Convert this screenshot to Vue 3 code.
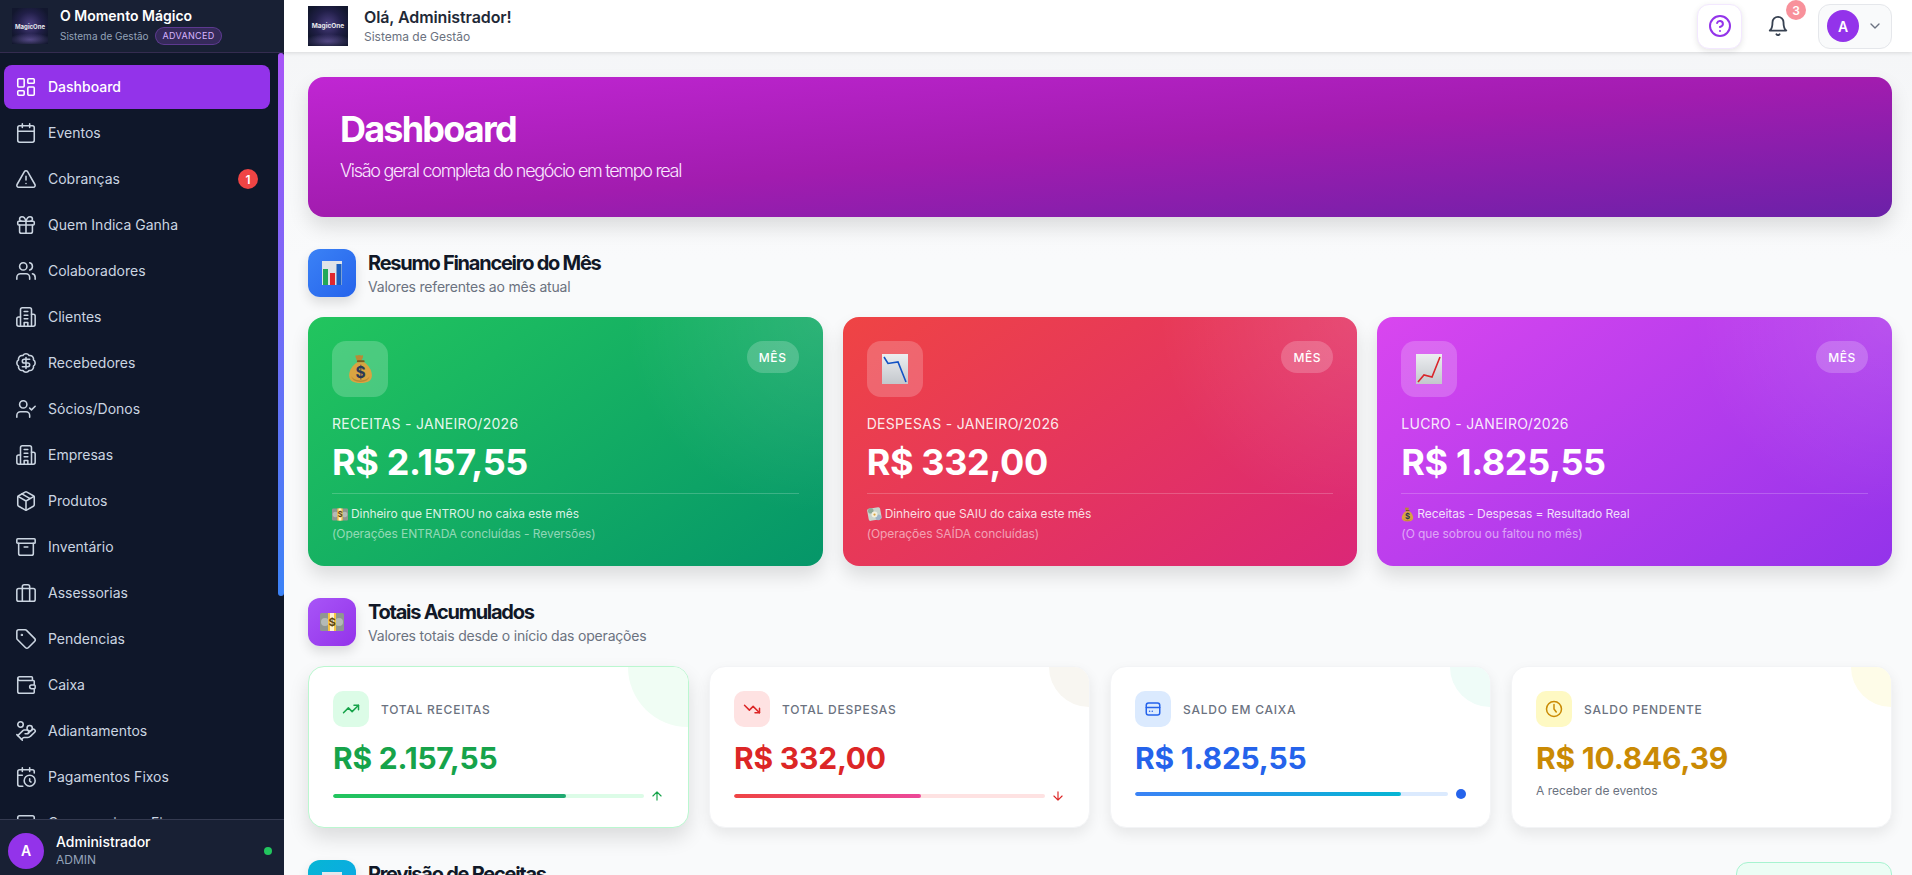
<template>
  <div class="layout">
    <aside class="sidebar">
      <div class="brand">
        <div class="logo"><span>MagicOne</span></div>
        <div class="brand-text">
          <div class="brand-name">O Momento Mágico</div>
          <div class="brand-sub">Sistema de Gestão <span class="plan">ADVANCED</span></div>
        </div>
      </div>
      <nav class="nav">
        <div class="scroll-thumb"></div>
        <a v-for="item in menu" :key="item.label" class="nav-item" :class="{ active: item.active }">
          <svg class="nav-icon" viewBox="0 0 24 24" v-html="item.icon"></svg>
          <span class="nav-label">{{ item.label }}</span>
          <span v-if="item.badge" class="nav-badge">{{ item.badge }}</span>
        </a>
      </nav>
      <div class="user-box">
        <div class="user-avatar">A</div>
        <div class="user-text">
          <div class="user-name">Administrador</div>
          <div class="user-role">ADMIN</div>
        </div>
        <span class="online"></span>
      </div>
    </aside>

    <div class="main">
      <header class="topbar">
        <div class="logo top-logo"><span>MagicOne</span></div>
        <div class="hello">
          <div class="hello-title">Olá, Administrador!</div>
          <div class="hello-sub">Sistema de Gestão</div>
        </div>
        <div class="top-actions">
          <button class="help-btn">
            <svg viewBox="0 0 24 24" width="24" height="24" class="ico"><circle cx="12" cy="12" r="10"/><path d="M9.09 9a3 3 0 0 1 5.83 1c0 2-3 3-3 3"/><path d="M12 17h.01"/></svg>
          </button>
          <div class="bell">
            <svg viewBox="0 0 24 24" width="22" height="22" class="ico"><path d="M6 8a6 6 0 0 1 12 0c0 7 3 9 3 9H3s3-2 3-9"/><path d="M10.3 21a1.94 1.94 0 0 0 3.4 0"/></svg>
            <span class="bell-badge">3</span>
          </div>
          <div class="profile">
            <div class="profile-avatar">A</div>
            <svg viewBox="0 0 24 24" width="16" height="16" class="ico chevron"><path d="m6 9 6 6 6-6"/></svg>
          </div>
        </div>
      </header>

      <main class="content">
        <section class="banner">
          <h1>Dashboard</h1>
          <p>Visão geral completa do negócio em tempo real</p>
        </section>

        <div class="section-head">
          <div class="section-icon blue">
            <svg viewBox="0 0 20 24" width="20" height="24" v-html="art.bars"></svg>
          </div>
          <div>
            <h2>Resumo Financeiro do Mês</h2>
            <p>Valores referentes ao mês atual</p>
          </div>
        </div>
        <div class="month-grid">
          <div v-for="card in monthCards" :key="card.label" class="month-card" :class="card.tone">
            <div class="month-top">
              <div class="month-icon">
                <svg :viewBox="card.box" :width="card.w" :height="card.h" v-html="card.art"></svg>
              </div>
              <span class="month-pill">MÊS</span>
            </div>
            <div class="month-label">{{ card.label }}</div>
            <div class="month-value">{{ card.value }}</div>
            <div class="month-note">
              <div class="note-line">
                <svg class="note-art" :viewBox="card.noteBox" :width="card.noteW" height="15" v-html="card.noteArt"></svg>
                <span>{{ card.note }}</span>
              </div>
              <div class="month-hint">{{ card.hint }}</div>
            </div>
          </div>
        </div>

        <div class="section-head">
          <div class="section-icon purple">
            <svg viewBox="0 0 24 18" width="24" height="18" v-html="art.note"></svg>
          </div>
          <div>
            <h2>Totais Acumulados</h2>
            <p>Valores totais desde o início das operações</p>
          </div>
        </div>
        <div class="total-grid">
          <div v-for="card in totalCards" :key="card.label" class="total-card" :class="card.tone">
            <div class="total-head">
              <div class="total-icon">
                <svg viewBox="0 0 24 24" width="18" height="18" class="ico" v-html="card.icon"></svg>
              </div>
              <span class="total-label">{{ card.label }}</span>
            </div>
            <div class="total-value">{{ card.value }}</div>
            <div v-if="card.fill" class="total-bar-row">
              <div class="total-bar"><div class="total-fill" :style="{ width: card.fill + '%' }"></div></div>
              <svg v-if="card.arrow" viewBox="0 0 24 24" width="14" height="14" class="ico total-arrow" v-html="card.arrow"></svg>
              <span v-else class="total-dot"></span>
            </div>
            <div v-else class="total-text">{{ card.text }}</div>
          </div>
        </div>

        <div class="section-head">
          <div class="section-icon cyan">
            <svg viewBox="0 0 20 24" width="20" height="24"><rect width="20" height="24" fill="#e5e7eb"/></svg>
          </div>
          <div>
            <h2>Previsão de Receitas</h2>
            <p>Valores a receber</p>
          </div>
          <div class="forecast-btn"></div>
        </div>
      </main>
    </div>
  </div>
</template>

<script setup>
const art = {
  bars: '<rect width="20" height="24" fill="#dfe3e8"/><rect x="1" y="8" width="5" height="16" fill="#22a858"/><rect x="8" y="12" width="5" height="12" fill="#e0282e"/><rect x="14.5" y="3" width="5" height="21" fill="#1a5fc0"/>',
  note: '<rect width="24" height="18" rx="1.5" fill="#8f9691"/><circle cx="5" cy="9" r="4" fill="#b4bab6"/><circle cx="19" cy="9" r="4" fill="#b4bab6"/><rect x="8" width="8" height="18" fill="#f6c544"/><rect x="10" width="4" height="18" fill="#fff3cf"/><text x="12" y="13" font-size="11" font-weight="700" text-anchor="middle" fill="#5c4310">$</text>',
  bag: '<path d="M9 7C7.5 4.5 6.5 2 7.5 1c1.2 1 2 .2 3.2 0 1.3.2 2.2 1 3.3 0 1.2 1 0 3.5-1.500 6z" fill="#b98a35"/><rect x="8.5" y="6" width="7.500" height="2.200" rx="1" fill="#7a5a1e"/><path d="M9 8C4 11 1 16 1 20.500 1 26 5 28 12 28s11-2 11-7.500C23 16 20 11 15.500 8z" fill="#d9a441"/><path d="M3 21c1 4 4 6 9 6s8-2 9-6c-1 2.500-4 4.500-9 4.500S4 23.500 3 21z" fill="#b98a35"/><text x="12" y="23" font-size="15" font-weight="700" text-anchor="middle" fill="#2b3a55">$</text>',
  down: '<defs><linearGradient id="chartDown" x1="0" y1="0" x2="0" y2="1"><stop offset="0" stop-color="#eceef0"/><stop offset="1" stop-color="#c3c7cc"/></linearGradient></defs><rect width="26" height="30" fill="url(#chartDown)"/><path d="M2 3 6 9.5 16 8 24 28" fill="none" stroke="#1453c4" stroke-width="1.6"/>',
  up: '<defs><linearGradient id="chartUp" x1="0" y1="0" x2="0" y2="1"><stop offset="0" stop-color="#eceef0"/><stop offset="1" stop-color="#c3c7cc"/></linearGradient></defs><rect width="26" height="30" fill="url(#chartUp)"/><path d="M2 28 8 21 16 23 24 3" fill="none" stroke="#d9262c" stroke-width="1.6"/>',
  flying: '<rect x="1" y="1" width="14" height="13" rx="2" fill="#c9d3cc" transform="rotate(-10 8 8)"/><circle cx="4" cy="4" r="3" fill="#8fa896"/><circle cx="12" cy="11" r="3" fill="#9fb4c8"/><circle cx="8" cy="8" r="3.2" fill="#f4f0dc"/><circle cx="8" cy="8" r="1.2" fill="#d9a441"/>'
}

const building = '<path d="M6 22V4a2 2 0 0 1 2-2h8a2 2 0 0 1 2 2v18Z"/><path d="M6 12H4a2 2 0 0 0-2 2v6a2 2 0 0 0 2 2h2M18 9h2a2 2 0 0 1 2 2v9a2 2 0 0 1-2 2h-2M10 6h4M10 10h4M10 14h4M10 22v-4h4v4"/>'

const menu = [
  { label: 'Dashboard', active: true, icon: '<rect x="3" y="3" width="7" height="9" rx="1"/><rect x="14" y="3" width="7" height="5" rx="1"/><rect x="14" y="12" width="7" height="9" rx="1"/><rect x="3" y="16" width="7" height="5" rx="1"/>' },
  { label: 'Eventos', icon: '<path d="M8 2v4M16 2v4"/><rect x="3" y="4" width="18" height="18" rx="2"/><path d="M3 10h18"/>' },
  { label: 'Cobranças', badge: 1, icon: '<path d="m21.73 18-8-14a2 2 0 0 0-3.48 0l-8 14A2 2 0 0 0 4 21h16a2 2 0 0 0 1.73-3"/><path d="M12 9v4M12 17h.01"/>' },
  { label: 'Quem Indica Ganha', icon: '<rect x="3" y="8" width="18" height="4" rx="1"/><path d="M12 8v13M19 12v7a2 2 0 0 1-2 2H7a2 2 0 0 1-2-2v-7"/><path d="M7.5 8a2.5 2.5 0 0 1 0-5A4.8 8 0 0 1 12 8a4.8 8 0 0 1 4.5-5 2.5 2.5 0 0 1 0 5"/>' },
  { label: 'Colaboradores', icon: '<path d="M16 21v-2a4 4 0 0 0-4-4H6a4 4 0 0 0-4 4v2"/><circle cx="9" cy="7" r="4"/><path d="M22 21v-2a4 4 0 0 0-3-3.87M16 3.13a4 4 0 0 1 0 7.75"/>' },
  { label: 'Clientes', icon: building },
  { label: 'Recebedores', icon: '<path d="M3.85 8.62a4 4 0 0 1 4.78-4.77 4 4 0 0 1 6.74 0 4 4 0 0 1 4.78 4.78 4 4 0 0 1 0 6.74 4 4 0 0 1-4.77 4.78 4 4 0 0 1-6.75 0 4 4 0 0 1-4.78-4.77 4 4 0 0 1 0-6.76Z"/><path d="M16 8h-6a2 2 0 1 0 0 4h4a2 2 0 1 1 0 4H8M12 18V6"/>' },
  { label: 'Sócios/Donos', icon: '<path d="M16 21v-2a4 4 0 0 0-4-4H6a4 4 0 0 0-4 4v2"/><circle cx="9" cy="7" r="4"/><path d="m16 11 2 2 4-4"/>' },
  { label: 'Empresas', icon: building },
  { label: 'Produtos', icon: '<path d="M11 21.73a2 2 0 0 0 2 0l7-4A2 2 0 0 0 21 16V8a2 2 0 0 0-1-1.73l-7-4a2 2 0 0 0-2 0l-7 4A2 2 0 0 0 3 8v8a2 2 0 0 0 1 1.73z"/><path d="M12 22V12M3.29 7 12 12l8.71-5M7.5 4.27l9 5.15"/>' },
  { label: 'Inventário', icon: '<rect x="2" y="3" width="20" height="5" rx="1"/><path d="M4 8v11a2 2 0 0 0 2 2h12a2 2 0 0 0 2-2V8M10 12h4"/>' },
  { label: 'Assessorias', icon: '<rect x="2" y="7" width="20" height="14" rx="2"/><path d="M16 21V5a2 2 0 0 0-2-2h-4a2 2 0 0 0-2 2v16"/>' },
  { label: 'Pendencias', icon: '<path d="M12.586 2.586A2 2 0 0 0 11.172 2H4a2 2 0 0 0-2 2v7.172a2 2 0 0 0 .586 1.414l8.704 8.704a2.426 2.426 0 0 0 3.42 0l6.58-6.58a2.426 2.426 0 0 0 0-3.42z"/><circle cx="7.5" cy="7.5" r=".5"/>' },
  { label: 'Caixa', icon: '<path d="M19 7V4a1 1 0 0 0-1-1H5a2 2 0 0 0 0 4h15a1 1 0 0 1 1 1v4h-3a2 2 0 0 0 0 4h3a1 1 0 0 0 1-1v-2a1 1 0 0 0-1-1"/><path d="M3 5v14a2 2 0 0 0 2 2h15a1 1 0 0 0 1-1v-4"/>' },
  { label: 'Adiantamentos', icon: '<path d="M11 15h2a2 2 0 1 0 0-4h-3c-.6 0-1.1.2-1.4.6L3 17"/><path d="m7 21 1.6-1.4c.3-.4.8-.6 1.4-.6h4c1.1 0 2.1-.4 2.8-1.2l4.6-4.4a2 2 0 0 0-2.75-2.91l-4.2 3.9"/><path d="m2 16 6 6"/><circle cx="16" cy="9" r="2.9"/><circle cx="6" cy="5" r="3"/>' },
  { label: 'Pagamentos Fixos', icon: '<path d="M21 7.5V6a2 2 0 0 0-2-2H5a2 2 0 0 0-2 2v14a2 2 0 0 0 2 2h3.5M16 2v4M8 2v4M3 10h5M17.5 17.5 16 16.3V14"/><circle cx="16" cy="16" r="6"/>' },
  { label: 'Compromissos Fixos', icon: '<rect x="3" y="4" width="18" height="18" rx="2"/>' }
]

const monthCards = [
  { tone: 'green', art: art.bag, box: '0 0 24 29', w: 25, h: 30, label: 'RECEITAS - JANEIRO/2026', value: 'R$ 2.157,55', noteArt: art.note, noteBox: '0 0 24 18', noteW: 16, note: 'Dinheiro que ENTROU no caixa este mês', hint: '(Operações ENTRADA concluídas - Reversões)' },
  { tone: 'red', art: art.down, box: '0 0 26 30', w: 26, h: 30, label: 'DESPESAS - JANEIRO/2026', value: 'R$ 332,00', noteArt: art.flying, noteBox: '0 0 16 16', noteW: 15, note: 'Dinheiro que SAIU do caixa este mês', hint: '(Operações SAÍDA concluídas)' },
  { tone: 'violet', art: art.up, box: '0 0 26 30', w: 26, h: 30, label: 'LUCRO - JANEIRO/2026', value: 'R$ 1.825,55', noteArt: art.bag, noteBox: '0 0 24 29', noteW: 13, note: 'Receitas - Despesas = Resultado Real', hint: '(O que sobrou ou faltou no mês)' }
]

const totalCards = [
  { tone: 'income', label: 'TOTAL RECEITAS', value: 'R$ 2.157,55', fill: 75, arrow: '<path d="m5 12 7-7 7 7M12 19V5"/>', icon: '<path d="M22 7 13.5 15.5l-5-5L2 17"/><path d="M16 7h6v6"/>' },
  { tone: 'expense', label: 'TOTAL DESPESAS', value: 'R$ 332,00', fill: 60, arrow: '<path d="M12 5v14M19 12l-7 7-7-7"/>', icon: '<path d="M22 17 13.5 8.5l-5 5L2 7"/><path d="M16 17h6v-6"/>' },
  { tone: 'balance', label: 'SALDO EM CAIXA', value: 'R$ 1.825,55', fill: 85, icon: '<rect x="3" y="4" width="18" height="16" rx="3"/><path d="M3 10h18M7.5 15h.01M11 15h.01"/>' },
  { tone: 'pending', label: 'SALDO PENDENTE', value: 'R$ 10.846,39', text: 'A receber de eventos', icon: '<circle cx="12" cy="12" r="10"/><path d="M12 6v6l3 4"/>' }
]
</script>

<style>
html, body {
  margin: 0;
  height: 100%;
  overflow: hidden;
  background: #f9fafb;
}
</style>

<style scoped>
.layout {
  display: flex;
  height: 875px;
  overflow: hidden;
  font-family: Inter, "Noto Sans", sans-serif;
  color: #111827;
}

.ico, .nav-icon {
  fill: none;
  stroke: currentColor;
  stroke-width: 2;
  stroke-linecap: round;
  stroke-linejoin: round;
}

/* sidebar */
.sidebar {
  width: 284px;
  flex-shrink: 0;
  display: flex;
  flex-direction: column;
  background: #0f172a;
}
.brand {
  height: 53px;
  box-sizing: border-box;
  flex-shrink: 0;
  display: flex;
  align-items: center;
  gap: 12px;
  padding: 0 12px;
  background: #182034;
  border-bottom: 1px solid #342c50;
}
.logo {
  width: 36px;
  height: 36px;
  flex-shrink: 0;
  display: flex;
  align-items: center;
  justify-content: center;
  background:
    radial-gradient(ellipse 60% 18% at 50% 88%, rgba(130, 110, 190, 0.55), transparent),
    radial-gradient(circle at 50% 45%, #4b3f80 0, #211f48 45%, #12172e 75%);
}
.logo span {
  font-size: 6px;
  font-weight: 700;
  color: #e5e7eb;
  white-space: nowrap;
}
.top-logo span {
  font-size: 6.5px;
}
.brand-name {
  font-size: 14px;
  font-weight: 600;
  color: #fff;
  line-height: 18px;
}
.brand-sub {
  display: flex;
  align-items: center;
  gap: 6px;
  font-size: 10px;
  color: #94a3b8;
  line-height: 18px;
  margin-top: 2px;
}
.plan {
  font-size: 9px;
  line-height: 16px;
  letter-spacing: 0.3px;
  padding: 0 7px;
  border-radius: 9px;
  color: #d8b4fe;
  background: rgba(168, 85, 247, 0.2);
  border: 1px solid rgba(168, 85, 247, 0.35);
}

.nav {
  position: relative;
  flex: 1;
  min-height: 0;
  overflow: hidden;
  padding: 12px 14px 0 4px;
  display: flex;
  flex-direction: column;
  gap: 2px;
}
.scroll-thumb {
  position: absolute;
  top: 0;
  right: 0;
  width: 6px;
  height: 543px;
  border-radius: 3px;
  background: linear-gradient(180deg, #a855f7, #3b82f6);
}
.nav-item {
  height: 44px;
  flex-shrink: 0;
  display: flex;
  align-items: center;
  gap: 11px;
  padding: 0 12px 0 11px;
  border-radius: 8px;
  font-size: 14px;
  font-weight: 400;
  color: #cbd5e1;
}
.nav-item.active {
  background: #9333ea;
  color: #fff;
  font-weight: 500;
}
.nav-icon {
  width: 22px;
  height: 22px;
  flex-shrink: 0;
  stroke-width: 1.7;
}
.nav-label {
  flex: 1;
  margin-bottom: 1px;
}
.nav-badge {
  width: 20px;
  height: 20px;
  border-radius: 50%;
  background: #ef4444;
  color: #fff;
  font-size: 12px;
  font-weight: 600;
  display: flex;
  align-items: center;
  justify-content: center;
}

.user-box {
  height: 56px;
  flex-shrink: 0;
  box-sizing: border-box;
  display: flex;
  align-items: center;
  gap: 12px;
  padding: 6px 12px 0 8px;
  background: #182034;
  border-top: 1px solid #343a50;
}
.user-avatar {
  width: 36px;
  height: 36px;
  border-radius: 50%;
  background: #9333ea;
  color: #fff;
  font-size: 14px;
  font-weight: 600;
  display: flex;
  align-items: center;
  justify-content: center;
}
.user-text {
  flex: 1;
}
.user-name {
  font-size: 14px;
  font-weight: 500;
  color: #fff;
  line-height: 18px;
}
.user-role {
  font-size: 12px;
  color: #94a3b8;
  line-height: 16px;
  margin-top: 1px;
}
.online {
  width: 8px;
  height: 8px;
  border-radius: 50%;
  background: #22c55e;
}

/* top bar */
.main {
  flex: 1;
  min-width: 0;
  display: flex;
  flex-direction: column;
  background: linear-gradient(180deg, #f4f5f7, #f9fafb 260px);
}
.topbar {
  height: 52px;
  flex-shrink: 0;
  box-sizing: border-box;
  display: flex;
  align-items: center;
  gap: 16px;
  padding: 0 20px 0 24px;
  background: #fff;
  box-shadow: 0 1px 4px rgba(0, 0, 0, 0.12);
  position: relative;
  z-index: 2;
}
.top-logo {
  width: 40px;
  height: 40px;
}
.hello-title {
  font-size: 16px;
  font-weight: 600;
  line-height: 20px;
  letter-spacing: -0.1px;
  color: #1f2937;
}
.hello-sub {
  font-size: 12px;
  line-height: 16px;
  color: #6b7280;
  margin-top: 2px;
}
.top-actions {
  margin-left: auto;
  display: flex;
  align-items: center;
}
.help-btn {
  width: 45px;
  height: 45px;
  box-sizing: border-box;
  display: flex;
  align-items: center;
  justify-content: center;
  padding: 0;
  background: #fff;
  color: #9333ea;
  border: 1px solid #f3e8ff;
  border-radius: 12px;
  box-shadow: 0 2px 6px rgba(0, 0, 0, 0.1);
}
.bell {
  position: relative;
  width: 22px;
  height: 22px;
  margin: 0 29px 0 25px;
  color: #374151;
}
.bell-badge {
  position: absolute;
  top: -15px;
  left: 19px;
  width: 20px;
  height: 20px;
  border-radius: 50%;
  background: #f8919b;
  color: #fff;
  font-size: 12px;
  font-weight: 600;
  display: flex;
  align-items: center;
  justify-content: center;
}
.profile {
  width: 74px;
  height: 45px;
  box-sizing: border-box;
  display: flex;
  align-items: center;
  gap: 8px;
  padding-left: 8px;
  background: #f9fafb;
  border: 1px solid #e5e7eb;
  border-radius: 12px;
}
.profile-avatar {
  width: 32px;
  height: 32px;
  border-radius: 50%;
  background: #9333ea;
  color: #fff;
  font-size: 14px;
  font-weight: 600;
  display: flex;
  align-items: center;
  justify-content: center;
}
.chevron {
  color: #6b7280;
}

/* content */
.content {
  flex: 1;
  min-height: 0;
  overflow: hidden;
  padding: 25px 20px 0 24px;
}
.banner {
  height: 140px;
  box-sizing: border-box;
  padding: 32px 32px 0;
  border-radius: 16px;
  color: #fff;
  background: linear-gradient(to bottom right, #c026d3, #a21caf 50%, #6b21a8);
  box-shadow: 0 10px 20px rgba(0, 0, 0, 0.12);
}
.banner h1 {
  margin: 0;
  font-size: 36px;
  line-height: 40px;
  font-weight: 700;
  letter-spacing: -1.8px;
}
.banner p {
  margin: 8px 0 0;
  font-size: 18px;
  line-height: 28px;
  font-weight: 300;
  letter-spacing: -1.3px;
  color: #fae8ff;
}

.section-head {
  display: flex;
  align-items: center;
  gap: 12px;
  margin: 32px 0 20px;
}
.section-icon {
  width: 48px;
  height: 48px;
  flex-shrink: 0;
  border-radius: 12px;
  display: flex;
  align-items: center;
  justify-content: center;
  box-shadow: 0 6px 12px rgba(0, 0, 0, 0.12);
}
.section-icon.blue { background: linear-gradient(135deg, #3b82f6, #2563eb); }
.section-icon.purple { background: linear-gradient(135deg, #a855f7, #9333ea); }
.section-icon.cyan { background: linear-gradient(135deg, #06b6d4, #0ea5e9); }
.section-head h2 {
  margin: 0;
  font-size: 20px;
  line-height: 28px;
  font-weight: 700;
  letter-spacing: -1.25px;
  color: #111827;
}
.section-head p {
  margin: 0;
  font-size: 14px;
  line-height: 20px;
  letter-spacing: -0.2px;
  color: #6b7280;
}
.forecast-btn {
  margin-left: auto;
  align-self: flex-start;
  margin-top: 2px;
  width: 156px;
  height: 40px;
  box-sizing: border-box;
  border: 1px solid #a7f3d0;
  border-radius: 12px;
  background: #ecfdf5;
}

/* month cards */
.month-grid {
  display: grid;
  grid-template-columns: repeat(3, 1fr);
  gap: 20px;
}
.month-card {
  position: relative;
  overflow: hidden;
  height: 249px;
  box-sizing: border-box;
  padding: 24px;
  border-radius: 16px;
  color: #fff;
  box-shadow: 0 10px 18px rgba(0, 0, 0, 0.12);
}
.month-card::before {
  content: "";
  position: absolute;
  top: -200px;
  right: -200px;
  width: 400px;
  height: 400px;
  border-radius: 50%;
  background: radial-gradient(circle, rgba(255, 255, 255, 0.12), rgba(255, 255, 255, 0) 70%);
}
.month-card.green { background: linear-gradient(145deg, #22c55e, #059669); }
.month-card.red { background: linear-gradient(145deg, #ef4444, #db2777); }
.month-card.violet { background: linear-gradient(145deg, #d946ef, #9333ea); }
.month-top {
  position: relative;
  display: flex;
  justify-content: space-between;
  align-items: flex-start;
}
.month-icon {
  width: 56px;
  height: 56px;
  border-radius: 14px;
  background: rgba(255, 255, 255, 0.2);
  display: flex;
  align-items: center;
  justify-content: center;
}
.month-pill {
  width: 52px;
  height: 32px;
  border-radius: 16px;
  background: rgba(255, 255, 255, 0.2);
  display: flex;
  align-items: center;
  justify-content: center;
  font-size: 12px;
  font-weight: 500;
  letter-spacing: 0.6px;
}
.month-label {
  position: relative;
  margin-top: 17px;
  font-size: 14px;
  line-height: 20px;
  letter-spacing: 0.3px;
  color: rgba(255, 255, 255, 0.9);
}
.month-value {
  position: relative;
  margin-top: 6px;
  font-size: 36px;
  line-height: 44px;
  font-weight: 700;
  letter-spacing: -0.36px;
}
.month-note {
  position: relative;
  margin-top: 9px;
  padding-top: 10px;
  border-top: 1px solid rgba(255, 255, 255, 0.2);
  font-size: 12px;
  line-height: 20px;
  letter-spacing: -0.08px;
  color: rgba(255, 255, 255, 0.85);
}
.note-line {
  display: flex;
  align-items: center;
  gap: 3px;
}
.month-hint {
  color: rgba(255, 255, 255, 0.55);
}

/* total cards */
.total-grid {
  display: grid;
  grid-template-columns: repeat(4, 1fr);
  gap: 20px;
}
.total-card {
  position: relative;
  overflow: hidden;
  height: 162px;
  box-sizing: border-box;
  padding: 24px;
  background: #fff;
  border: 1px solid #f3f4f6;
  border-radius: 16px;
  box-shadow: 0 6px 14px rgba(0, 0, 0, 0.08);
}
.total-card::before {
  content: "";
  position: absolute;
  top: -40px;
  right: -40px;
  width: 80px;
  height: 80px;
  border-radius: 50%;
}
.total-card.income {
  border-color: #bbf7d0;
  box-shadow: 0 10px 20px rgba(0, 0, 0, 0.12);
}
.total-card.income::before {
  top: -60px;
  right: -60px;
  width: 120px;
  height: 120px;
  background: #f0fdf4;
}
.total-card.expense::before { background: #f8f6f1; }
.total-card.balance::before { background: #effcf8; }
.total-card.pending::before { background: #fefce8; }
.total-head {
  position: relative;
  display: flex;
  align-items: center;
  gap: 12px;
}
.total-icon {
  width: 36px;
  height: 36px;
  border-radius: 10px;
  display: flex;
  align-items: center;
  justify-content: center;
}
.income .total-icon { background: #dcfce7; color: #16a34a; }
.expense .total-icon { background: #fee2e2; color: #dc2626; }
.balance .total-icon { background: #dbeafe; color: #2563eb; }
.pending .total-icon { background: #fef9c3; color: #ca8a04; }
.total-label {
  font-size: 12px;
  font-weight: 500;
  letter-spacing: 0.75px;
  color: #6b7280;
}
.total-value {
  margin-top: 13px;
  font-size: 30px;
  line-height: 36px;
  font-weight: 700;
  letter-spacing: -0.2px;
}
.income .total-value { color: #16a34a; }
.expense .total-value { color: #dc2626; }
.balance .total-value { color: #2563eb; }
.pending .total-value { color: #ca8a04; }
.total-bar-row {
  display: flex;
  align-items: center;
  gap: 6px;
  margin-top: 13px;
}
.total-bar {
  flex: 1;
  height: 4px;
  border-radius: 2px;
  overflow: hidden;
}
.income .total-bar { background: #dcfce7; }
.expense .total-bar { background: #fee2e2; }
.balance .total-bar { background: #dbeafe; }
.total-fill {
  height: 100%;
  border-radius: 2px;
}
.income .total-fill { background: linear-gradient(90deg, #22c55e, #1fa971); }
.expense .total-fill { background: linear-gradient(90deg, #ef4444, #ec4899); }
.balance .total-fill { background: linear-gradient(90deg, #3b82f6, #06b6d4); }
.income .total-arrow { color: #16a34a; }
.expense .total-arrow { color: #dc2626; }
.total-dot {
  width: 10px;
  height: 10px;
  margin-left: 2px;
  border-radius: 50%;
  background: #2563eb;
}
.total-text {
  margin-top: 7px;
  font-size: 12px;
  line-height: 16px;
  color: #6b7280;
}
</style>
